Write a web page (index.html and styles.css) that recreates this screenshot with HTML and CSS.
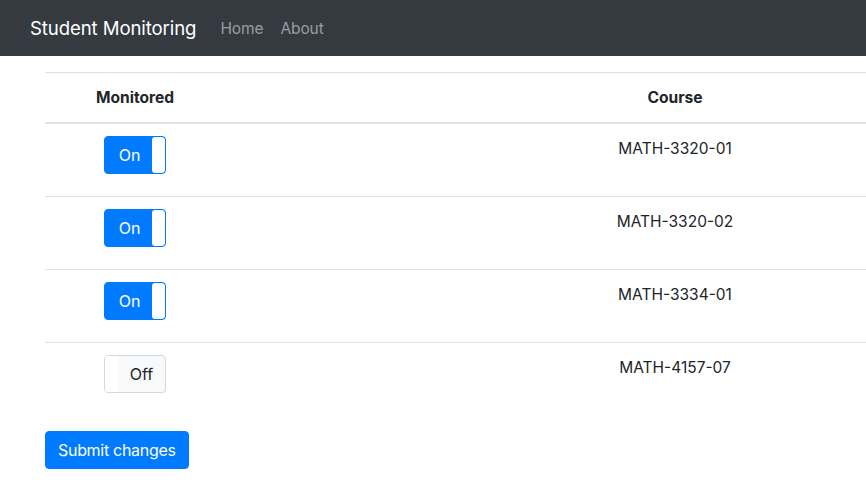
FILE: index.html
```html
<!DOCTYPE html>
<html lang="en">
<head>
<meta charset="utf-8">
<title>Student Monitoring</title>
<link rel="stylesheet" href="styles.css">
</head>
<body>
<nav class="navbar">
  <a class="brand" href="#">Student Monitoring</a>
  <ul class="nav-links">
    <li><a href="#">Home</a></li>
    <li><a href="#">About</a></li>
  </ul>
</nav>
<main class="content">
  <form class="monitor-form">
    <div class="table-wrap">
      <table class="table">
        <thead>
          <tr><th class="col-mon">Monitored</th><th class="col-course">Course</th></tr>
        </thead>
        <tbody>
          <tr>
            <td class="col-mon"><span class="toggle on"><span class="toggle-label">On</span><span class="toggle-handle"></span></span></td>
            <td class="col-course">MATH-3320-01</td>
          </tr>
          <tr>
            <td class="col-mon"><span class="toggle on"><span class="toggle-label">On</span><span class="toggle-handle"></span></span></td>
            <td class="col-course">MATH-3320-02</td>
          </tr>
          <tr>
            <td class="col-mon"><span class="toggle on"><span class="toggle-label">On</span><span class="toggle-handle"></span></span></td>
            <td class="col-course">MATH-3334-01</td>
          </tr>
          <tr>
            <td class="col-mon"><span class="toggle off"><span class="toggle-handle"></span><span class="toggle-label">Off</span></span></td>
            <td class="col-course">MATH-4157-07</td>
          </tr>
        </tbody>
      </table>
    </div>
    <button type="button" class="btn-primary">Submit changes</button>
  </form>
</main>
</body>
</html>
```

FILE: styles.css
```css
* { box-sizing: border-box; }
html, body { margin: 0; padding: 0; }
body {
  font-family: Inter, "Noto Sans", "Liberation Sans", sans-serif;
  font-size: 16px;
  line-height: 24px;
  color: #212529;
  background: #fff;
  overflow-x: hidden;
}
.navbar {
  height: 56px;
  background: #343a40;
  display: flex;
  align-items: center;
  padding: 0 30px;
}
.brand {
  color: #fff;
  font-size: 18.6px;
  text-decoration: none;
  margin-right: 24px;
  letter-spacing: -0.1px;
}
.nav-links {
  list-style: none;
  margin: 0;
  padding: 0;
  display: flex;
  gap: 17px;
}
.nav-links a {
  color: rgba(255,255,255,.5);
  text-decoration: none;
  font-size: 15.5px;
  letter-spacing: -0.1px;
}
.content {
  padding: 16px 0 0 45px;
}
.table-wrap { width: 1100px; }
.table {
  border-collapse: collapse;
  width: 1080px;
  margin-bottom: 16px;
}
.table th, .table td {
  padding: 12px;
  border-top: 1px solid #dee2e6;
  vertical-align: top;
  text-align: center;
}
.table thead th {
  font-weight: 700;
  font-size: 15.6px;
  padding-top: 13px;
  border-bottom: 2px solid #dee2e6;
  vertical-align: bottom;
}
.table td { height: 73px; padding-top: 13px; }
.col-mon { width: 180px; }
.col-course { font-size: 15.5px; }
.toggle {
  display: inline-flex;
  width: 62px;
  height: 38px;
  border-radius: 4px;
  overflow: hidden;
  vertical-align: top;
  font-size: 16px;
  margin-top: -1px;
}
.toggle.on {
  background: #007bff;
  border: 1px solid #007bff;
  color: #fff;
}
.toggle.off {
  background: #f8f9fa;
  border: 1px solid #d6d8db;
  color: #212529;
}
.toggle-label {
  flex: 1;
  display: flex;
  align-items: center;
  justify-content: center;
}
.toggle.on .toggle-label { padding-left: 2px; }
.toggle-handle {
  width: 13px;
  background: #fff;
}
.toggle.on .toggle-handle { border-radius: 3px; }
.btn-primary {
  font-family: inherit;
  font-size: 16px;
  line-height: 24px;
  letter-spacing: -0.3px;
  color: #fff;
  background: #007bff;
  border: 1px solid #007bff;
  border-radius: 4px;
  padding: 6px 12px;
  cursor: pointer;
}
```
